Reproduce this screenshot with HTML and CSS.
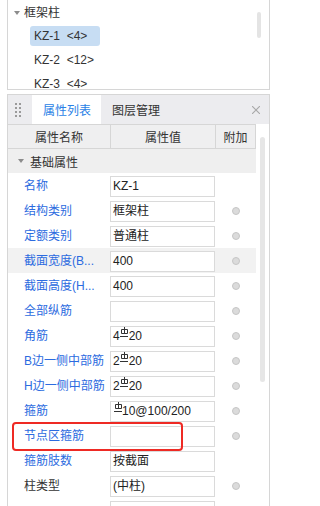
FILE: index.html
```html
<!DOCTYPE html>
<html lang="zh-CN">
<head>
<meta charset="utf-8">
<title>属性列表</title>
<link rel="stylesheet" href="styles.css">
</head>
<body>
<div class="tree-panel">
  <div class="tree">
    <div class="tree-root"><span class="caret"></span><span>框架柱</span></div>
    <div class="tree-item"><span class="item-label selected">KZ-1&nbsp; &lt;4&gt;</span></div>
    <div class="tree-item"><span class="item-label">KZ-2&nbsp; &lt;12&gt;</span></div>
    <div class="tree-item"><span class="item-label">KZ-3&nbsp; &lt;4&gt;</span></div>
  </div>
  <div class="tree-scroll"><div class="tree-thumb"></div></div>
</div>

<div class="prop-panel">
  <div class="tabbar">
    <div class="handle">
      <span class="hdot"></span><span class="hdot"></span>
      <span class="hdot"></span><span class="hdot"></span>
      <span class="hdot"></span><span class="hdot"></span>
      <span class="hdot"></span><span class="hdot"></span>
    </div>
    <div class="tab active">属性列表</div>
    <div class="tab">图层管理</div>
    <div class="close"><svg width="8" height="8" viewBox="0 0 8 8"><path d="M0 0L8 8M8 0L0 8" stroke="#a8a8a8" stroke-width="1.1" fill="none"/></svg></div>
  </div>
  <div class="prop-body">
    <div class="table">
      <div class="thead">
        <div class="th">属性名称</div>
        <div class="th">属性值</div>
        <div class="th">附加</div>
      </div>
      <div class="group"><span class="caret"></span><span>基础属性</span></div>

      <div class="row"><div class="label">名称</div><div class="value">KZ-1</div><div class="extra"></div></div>
      <div class="row"><div class="label">结构类别</div><div class="value">框架柱</div><div class="extra"><span class="radio"></span></div></div>
      <div class="row"><div class="label">定额类别</div><div class="value">普通柱</div><div class="extra"><span class="radio"></span></div></div>
      <div class="row hover"><div class="label">截面宽度(B...</div><div class="value">400</div><div class="extra"><span class="radio"></span></div></div>
      <div class="row"><div class="label">截面高度(H...</div><div class="value">400</div><div class="extra"><span class="radio"></span></div></div>
      <div class="row"><div class="label">全部纵筋</div><div class="value"></div><div class="extra"><span class="radio"></span></div></div>
      <div class="row"><div class="label">角筋</div><div class="value">4<svg class="rebar" width="8" height="10" viewBox="0 0 8 10" aria-label="三级钢"><path d="M4.5 0V7M1.5 2.5H7.5V6.5H1.5ZM0 9.5H8" fill="none" stroke="#333" stroke-width="1"/></svg>20</div><div class="extra"><span class="radio"></span></div></div>
      <div class="row"><div class="label">B边一侧中部筋</div><div class="value">2<svg class="rebar" width="8" height="10" viewBox="0 0 8 10" aria-label="三级钢"><path d="M4.5 0V7M1.5 2.5H7.5V6.5H1.5ZM0 9.5H8" fill="none" stroke="#333" stroke-width="1"/></svg>20</div><div class="extra"><span class="radio"></span></div></div>
      <div class="row"><div class="label">H边一侧中部筋</div><div class="value">2<svg class="rebar" width="8" height="10" viewBox="0 0 8 10" aria-label="三级钢"><path d="M4.5 0V7M1.5 2.5H7.5V6.5H1.5ZM0 9.5H8" fill="none" stroke="#333" stroke-width="1"/></svg>20</div><div class="extra"><span class="radio"></span></div></div>
      <div class="row"><div class="label">箍筋</div><div class="value"><svg class="rebar" width="8" height="10" viewBox="0 0 8 10" aria-label="三级钢"><path d="M4.5 0V7M1.5 2.5H7.5V6.5H1.5ZM0 9.5H8" fill="none" stroke="#333" stroke-width="1"/></svg>10@100/200</div><div class="extra"><span class="radio"></span></div></div>
      <div class="row"><div class="label">节点区箍筋</div><div class="value"></div><div class="extra"><span class="radio"></span></div><div class="mark"></div></div>
      <div class="row"><div class="label">箍筋肢数</div><div class="value">按截面</div><div class="extra"></div></div>
      <div class="row"><div class="label plain">柱类型</div><div class="value">(中柱)</div><div class="extra"><span class="radio"></span></div></div>
      <div class="row"><div class="label"></div><div class="value"></div><div class="extra"></div></div>
    </div>
    <div class="prop-scroll"><div class="prop-thumb"></div></div>
  </div>
</div>
</body>
</html>
```

FILE: styles.css
```css
* {
  box-sizing: border-box;
}

html,
body {
  margin: 0;
  padding: 0;
}

body {
  width: 272px;
  height: 506px;
  overflow: hidden;
  background: #ffffff;
  font-family: "Liberation Sans", "Noto Sans CJK SC", sans-serif;
  font-size: 12px;
  color: #333333;
}

/* ---------- tree panel ---------- */
.tree-panel {
  margin-left: 7px;
  width: 263px;
  height: 90px;
  border: 1px solid #d6d6d6;
  border-top: 0;
  display: flex;
  overflow: hidden;
}

.tree {
  flex: 1;
}

.tree-root {
  height: 24px;
  padding-top: 2px;
  padding-left: 6px;
  display: flex;
  align-items: center;
  line-height: 16px;
}

.caret {
  width: 0;
  height: 0;
  border-left: 3px solid transparent;
  border-right: 3px solid transparent;
  border-top: 4px solid #8c8c8c;
  margin-right: 4px;
}

.tree-item {
  height: 24px;
  padding-left: 22px;
  display: flex;
  align-items: center;
}

.item-label {
  height: 20px;
  width: 70px;
  padding-left: 4px;
  line-height: 20px;
  border-radius: 3px;
  white-space: nowrap;
}

.item-label.selected {
  background: #c7ddf3;
}

.tree-scroll {
  width: 13px;
}

.tree-thumb {
  margin-top: 12px;
  margin-left: 1px;
  width: 4px;
  height: 26px;
  border-radius: 2px;
  background: #e4e4e4;
}

/* ---------- property panel ---------- */
.prop-panel {
  margin-top: 4px;
  margin-left: 7px;
  width: 263px;
  border: 1px solid #d6d6d6;
  border-bottom: 0;
}

.tabbar {
  height: 29px;
  display: flex;
  align-items: stretch;
  background: #ececef;
}

.handle {
  width: 24px;
  padding-left: 7px;
  display: grid;
  grid-template-columns: 2px 2px;
  grid-auto-rows: 2px;
  column-gap: 2px;
  row-gap: 2px;
  align-content: center;
}

.hdot {
  width: 2px;
  height: 2px;
  background: #9a9a9a;
}

.tab {
  display: flex;
  align-items: center;
  padding: 0 10px 0 11px;
  color: #333333;
  white-space: nowrap;
}

.tab.active {
  background: #ffffff;
  color: #2a7fe6;
}

.close {
  margin-left: auto;
  padding-right: 9px;
  display: flex;
  align-items: center;
}

.close svg {
  display: block;
}

.prop-body {
  display: flex;
}

.table {
  width: 248px;
}

.thead {
  display: grid;
  grid-template-columns: 103px 105px 40px;
  height: 25px;
  border-top: 1px solid #d6d6d6;
  border-bottom: 1px solid #d6d6d6;
  background: #efeff0;
}

.th {
  display: flex;
  align-items: center;
  justify-content: center;
  border-right: 1px solid #d6d6d6;
  color: #333333;
}

.group {
  height: 24px;
  padding-left: 10px;
  display: flex;
  align-items: center;
  background: #efefef;
}

.group .caret {
  margin-right: 6px;
}

.row {
  position: relative;
  display: grid;
  grid-template-columns: 102px 105px 41px;
  height: 25px;
}

.row.hover {
  background: #f2f2f2;
}

.label {
  align-self: center;
  padding-left: 16px;
  line-height: 16px;
  white-space: nowrap;
  overflow: hidden;
  color: #2c6be0;
}

.label.plain {
  color: #333333;
}

.value {
  margin-top: 3px;
  height: 21px;
  border: 1px solid #dadada;
  background: #ffffff;
  padding-left: 2px;
  line-height: 19px;
  white-space: nowrap;
  overflow: hidden;
  color: #222222;
}

.rebar {
  vertical-align: 3px;
  margin: 0 0.5px;
}

.extra {
  display: flex;
  align-items: center;
  justify-content: center;
}

.radio {
  width: 8px;
  height: 8px;
  border-radius: 50%;
  background: #dbdbdb;
  border: 1px solid #c6c6c6;
}

.mark {
  position: absolute;
  left: 4px;
  top: -1px;
  width: 171px;
  height: 29px;
  border: 2px solid #ee2a24;
  border-radius: 4px;
  pointer-events: none;
}

.prop-scroll {
  width: 13px;
}

.prop-thumb {
  margin-top: 13px;
  margin-left: 4px;
  width: 5px;
  height: 245px;
  border-radius: 3px;
  background: #e6e6e6;
}
```
